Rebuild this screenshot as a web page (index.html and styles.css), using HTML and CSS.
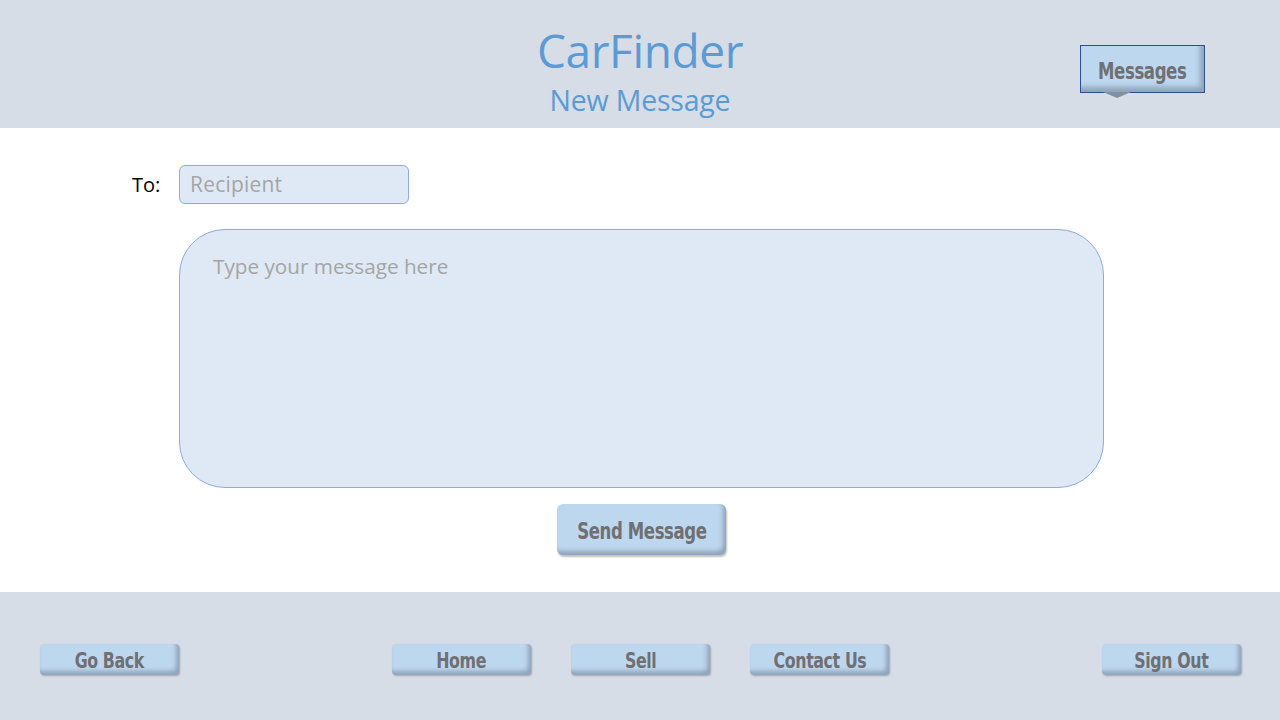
FILE: index.html
```html
<!DOCTYPE html>
<html lang="en">
<head>
<meta charset="utf-8">
<title>CarFinder - New Message</title>
<link rel="stylesheet" href="styles.css">
</head>
<body>
<header class="header">
  <div class="titles">
    <h1 class="title">CarFinder</h1>
    <h2 class="subtitle">New Message</h2>
  </div>
  <button class="btn callout"><span class="lbl">Messages</span></button>
</header>
<main class="main">
  <div class="to-row">
    <label class="to-label">To:</label>
    <div class="recipient">Recipient</div>
  </div>
  <div class="message-box">Type your message here</div>
  <div class="send-row">
    <button class="btn send"><span class="lbl">Send Message</span></button>
  </div>
</main>
<footer class="footer">
  <button class="btn nav"><span class="lbl">Go Back</span></button>
  <div class="nav-group">
    <button class="btn nav"><span class="lbl">Home</span></button>
    <button class="btn nav"><span class="lbl">Sell</span></button>
    <button class="btn nav"><span class="lbl">Contact Us</span></button>
  </div>
  <button class="btn nav"><span class="lbl">Sign Out</span></button>
</footer>
</body>
</html>
```
FILE: styles.css
```css
* { box-sizing: border-box; }
html, body { margin: 0; padding: 0; }
body {
  width: 1280px;
  height: 720px;
  overflow: hidden;
  font-family: "Open Sans", "Noto Sans", sans-serif;
  background: #ffffff;
  display: flex;
  flex-direction: column;
}
.header {
  height: 128px;
  background: #d6dde6;
  position: relative;
  display: flex;
  justify-content: center;
}
.titles {
  display: flex;
  flex-direction: column;
  align-items: center;
  padding-top: 21px;
}
.title {
  margin: 0;
  font-weight: 400;
  font-size: 46px;
  line-height: 58px;
  color: #5b9bd5;
  letter-spacing: -0.4px;
}
.subtitle {
  margin: 3px 0 0;
  font-weight: 400;
  font-size: 28.5px;
  line-height: 36px;
  color: #5b9bd5;
  letter-spacing: -0.2px;
}
.btn {
  font-family: "DejaVu Sans Condensed", "Liberation Sans Narrow", sans-serif;
  font-weight: bold;
  color: #6f6f74;
  background: #bdd7ee;
  border: none;
  padding: 0;
  cursor: pointer;
  letter-spacing: -0.5px;
}
.lbl {
  display: inline-block;
  transform: scaleX(0.8);
}
.callout {
  position: absolute;
  left: 1080px;
  top: 45px;
  width: 125px;
  height: 48px;
  font-size: 23px;
  line-height: 50px;
  border: 1px solid #2f4f8f;
  box-shadow: inset -4px -5px 5px rgba(60, 70, 90, 0.35);
}
.callout::after {
  content: "";
  position: absolute;
  left: 22px;
  bottom: -6px;
  width: 0;
  height: 0;
  border-left: 14px solid transparent;
  border-right: 14px solid transparent;
  border-top: 6px solid #7f8fa6;
}
.main {
  height: 464px;
  padding: 37px 0 0 179px;
}
.to-row {
  display: flex;
  align-items: center;
  margin-left: -47px;
}
.to-label {
  width: 47px;
  font-size: 20px;
  color: #000;
}
.recipient {
  width: 230px;
  height: 39px;
  background: #dee9f5;
  border: 1px solid #8faadc;
  border-radius: 6px;
  font-size: 21px;
  color: #a5a5a5;
  padding-left: 10px;
  line-height: 36px;
  letter-spacing: 0.2px;
}
.message-box {
  margin-top: 25px;
  width: 925px;
  height: 259px;
  background: #dee9f5;
  border: 1px solid #8faadc;
  border-radius: 46px;
  padding: 22px 0 0 33px;
  font-size: 20.7px;
  color: #a5a5a5;
}
.send-row {
  width: 925px;
  display: flex;
  justify-content: center;
  margin-top: 16px;
}
.send {
  width: 169px;
  height: 51px;
  border-radius: 6px;
  font-size: 23px;
  line-height: 54px;
  box-shadow: inset -3px -4px 4px rgba(60, 70, 90, 0.35), 1px 2px 2px rgba(0, 0, 0, 0.25);
}
.footer {
  height: 128px;
  background: #d6dde6;
  display: flex;
  justify-content: space-between;
  align-items: flex-start;
  padding: 52px 39px 0 40px;
}
.nav-group {
  display: flex;
  gap: 40px;
}
.nav {
  width: 139px;
  height: 31px;
  border-radius: 4px;
  font-size: 22px;
  line-height: 34px;
  box-shadow: inset -3px -4px 4px rgba(60, 70, 90, 0.35), 1px 1px 2px rgba(0, 0, 0, 0.25);
}
```
